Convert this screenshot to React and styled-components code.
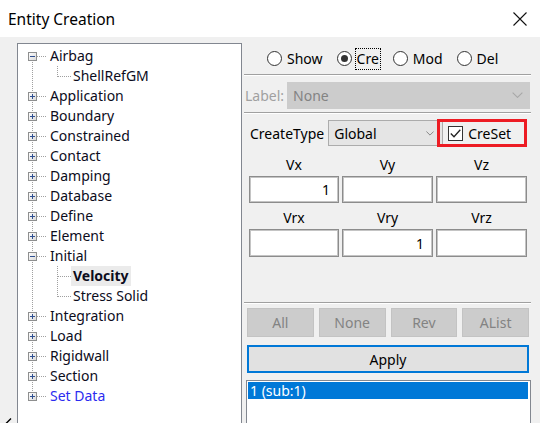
import React from "react";
import styled, { createGlobalStyle } from "styled-components";

const GlobalStyle = createGlobalStyle`
  html, body {
    margin: 0;
    padding: 0;
    background: #f0f0f0;
    overflow: hidden;
  }
  body {
    font-family: "Noto Sans", "Open Sans", sans-serif;
  }
`;

const Window = styled.div`
  width: 540px;
  height: 423px;
  display: flex;
  flex-direction: column;
  background: #f0f0f0;
  color: #000;
  overflow: hidden;
`;

const TitleBar = styled.div`
  height: 37px;
  flex: none;
  box-sizing: border-box;
  background: #fff;
  display: flex;
  align-items: center;
  justify-content: space-between;
  padding: 0 13px 0 8px;
`;

const Title = styled.span`
  font-size: 15.5px;
  line-height: 20px;
`;

const Body = styled.div`
  flex: 1;
  min-height: 0;
  display: flex;
  padding-top: 6px;
  overflow: hidden;
`;

const SideGutter = styled.div`
  width: 17px;
  flex: none;
  display: flex;
  align-items: flex-end;
  justify-content: center;
  svg {
    margin-bottom: -6px;
  }
`;

const TreePanel = styled.div`
  width: 225px;
  height: 400px;
  flex: none;
  box-sizing: border-box;
  border: 1px solid #828790;
  background: #fff;
  padding-top: 2px;
`;

const TreeRow = styled.div`
  height: 20px;
  display: flex;
  align-items: center;
`;

const TreeLabel = styled.span`
  height: 20px;
  line-height: 20px;
  padding: 0 2px;
  font-size: 14px;
  white-space: nowrap;
  font-weight: ${(p) => (p.$selected ? 700 : 400)};
  background: ${(p) => (p.$selected ? "#ebebeb" : "transparent")};
  color: ${(p) => (p.$link ? "#2b2bf0" : "#0c0c1c")};
`;

const RightPanel = styled.div`
  width: 287px;
  flex: none;
  margin-left: 2px;
  display: flex;
  flex-direction: column;
  & > * {
    flex-shrink: 0;
  }
`;

const RadioRow = styled.div`
  height: 31px;
  display: flex;
  align-items: center;
  gap: 13px;
  padding-left: 23px;
`;

const RadioItem = styled.label`
  display: flex;
  align-items: center;
  gap: 4px;
  font-size: 14px;
`;

const RadioCircle = styled.span`
  width: 15px;
  height: 15px;
  box-sizing: border-box;
  border: 1px solid #333;
  border-radius: 50%;
  background: #fff;
  display: flex;
  align-items: center;
  justify-content: center;
  &::after {
    content: "";
    width: 7px;
    height: 7px;
    border-radius: 50%;
    background: ${(p) => (p.$checked ? "#333" : "transparent")};
  }
`;

const RadioText = styled.span`
  line-height: 18px;
  padding: 1px;
  outline: ${(p) => (p.$focused ? "1px dotted #000" : "none")};
`;

const Separator = styled.div`
  height: 0;
  border-top: 1px solid #a0a0a0;
  border-bottom: 1px solid #fff;
  margin-top: ${(p) => p.$mt || 0}px;
`;

const FieldRow = styled.div`
  display: flex;
  align-items: center;
  height: 28px;
  margin-top: ${(p) => p.$mt || 0}px;
  padding-left: ${(p) => p.$pl || 0}px;
  position: relative;
`;

const FieldLabel = styled.span`
  font-size: 14px;
  color: ${(p) => (p.$disabled ? "#a0a0a0" : "#000")};
  white-space: nowrap;
`;

const Select = styled.div`
  box-sizing: border-box;
  height: ${(p) => p.$h}px;
  width: ${(p) => p.$w}px;
  margin-left: ${(p) => p.$ml}px;
  display: flex;
  align-items: center;
  justify-content: space-between;
  padding: 0 ${(p) => (p.$disabled ? 6 : 8)}px 0 5px;
  font-size: 14px;
  background: ${(p) => (p.$disabled ? "#cccccc" : "#e5e5e5")};
  border: 1px solid ${(p) => (p.$disabled ? "#cccccc" : "#acacac")};
  color: ${(p) => (p.$disabled ? "#838383" : "#000")};
`;

const CheckWrap = styled.label`
  display: flex;
  align-items: center;
  gap: 5px;
  margin-left: 5px;
  font-size: 14px;
`;

const CheckBox = styled.span`
  width: 15px;
  height: 15px;
  box-sizing: border-box;
  border: 1px solid #333;
  background: #fff;
  display: flex;
  align-items: center;
  justify-content: center;
`;

const Highlight = styled.div`
  position: absolute;
  left: 193px;
  top: 0;
  width: 90px;
  height: 28px;
  box-sizing: border-box;
  border: 3px solid #ed1c24;
  pointer-events: none;
`;

const VectorGrid = styled.div`
  display: grid;
  grid-template-columns: 90px 91px 91px;
  grid-template-rows: 29px 27px 26px 28px;
  column-gap: 3px;
  padding-left: 5px;
`;

const VectorHead = styled.span`
  align-self: end;
  justify-self: center;
  font-size: 14px;
  line-height: 20px;
  margin-bottom: 1px;
`;

const VectorInput = styled.div`
  box-sizing: border-box;
  border: 1px solid #8c8c8c;
  box-shadow: inset 0 0 0 1px #c4c4c4;
  background: #fff;
  display: flex;
  align-items: center;
  justify-content: flex-end;
  padding-right: 8px;
  font-size: 14px;
`;

const ButtonRow = styled.div`
  display: grid;
  grid-template-columns: repeat(4, 1fr);
  column-gap: 5px;
  margin: 4px 2px 0 3px;
  height: 29px;
`;

const Button = styled.div`
  box-sizing: border-box;
  display: flex;
  align-items: center;
  justify-content: center;
  font-size: 14px;
  background: ${(p) => (p.$primary ? "#e1e1e1" : "#cccccc")};
  border: ${(p) => (p.$primary ? "2px solid #0078d7" : "1px solid #c3c3c3")};
  color: ${(p) => (p.$primary ? "#000" : "#838383")};
`;

const ApplyButton = styled(Button)`
  height: 28px;
  margin: 8px 2px 0 3px;
`;

const ListBox = styled.div`
  margin: 7px 0 0 2px;
  height: 60px;
  box-sizing: border-box;
  border: 1px solid #828790;
  padding: 1px 2px 0 1px;
  background: #fff;
`;

const ListItem = styled.div`
  height: 17px;
  line-height: 17px;
  padding-left: 2px;
  font-size: 14px;
  color: ${(p) => (p.$selected ? "#fff" : "#000")};
  background: ${(p) => (p.$selected ? "#0078d7" : "transparent")};
`;

const tree = [
  { label: "Airbag", open: true, children: ["ShellRefGM"] },
  { label: "Application" },
  { label: "Boundary" },
  { label: "Constrained" },
  { label: "Contact" },
  { label: "Damping" },
  { label: "Database" },
  { label: "Define" },
  { label: "Element" },
  { label: "Initial", open: true, children: ["Velocity", "Stress Solid"], selected: "Velocity" },
  { label: "Integration" },
  { label: "Load" },
  { label: "Rigidwall" },
  { label: "Section" },
  { label: "Set Data", link: true },
];

const DOT = { stroke: "#a0a0a0", strokeWidth: 1, strokeDasharray: "1 1" };

function Expander({ open }) {
  return (
    <g>
      <defs>
        <linearGradient id="expfill" x1="0" y1="0" x2="1" y2="1">
          <stop offset="0" stopColor="#ffffff" />
          <stop offset="1" stopColor="#d8d8d8" />
        </linearGradient>
      </defs>
      <rect x="10.5" y="6.5" width="8" height="8" fill="url(#expfill)" stroke="#8e8f8f" />
      <line x1="12" y1="10.5" x2="17" y2="10.5" stroke="#2f4f8f" />
      {!open && <line x1="14.5" y1="8" x2="14.5" y2="13" stroke="#2f4f8f" />}
    </g>
  );
}

function TopGutter({ first, last, open }) {
  return (
    <svg width="30" height="20">
      <line x1="14.5" y1={first ? 10 : 0} x2="14.5" y2={last ? 10 : 20} {...DOT} />
      <line x1="19" y1="10.5" x2="29" y2="10.5" {...DOT} />
      <Expander open={open} />
    </svg>
  );
}

function ChildGutter({ last }) {
  return (
    <svg width="53" height="20">
      <line x1="14.5" y1="0" x2="14.5" y2="20" {...DOT} />
      <line x1="39.5" y1="0" x2="39.5" y2={last ? 11 : 20} {...DOT} />
      <line x1="40" y1="10.5" x2="53" y2="10.5" {...DOT} />
    </svg>
  );
}

function Tree() {
  const rows = [];
  tree.forEach((node, i) => {
    rows.push(
      <TreeRow key={node.label}>
        <TopGutter first={i === 0} last={i === tree.length - 1} open={node.open} />
        <TreeLabel $link={node.link}>{node.label}</TreeLabel>
      </TreeRow>
    );
    if (node.open) {
      node.children.forEach((child, j) => {
        rows.push(
          <TreeRow key={child}>
            <ChildGutter last={j === node.children.length - 1} />
            <TreeLabel $selected={node.selected === child}>{child}</TreeLabel>
          </TreeRow>
        );
      });
    }
  });
  return <TreePanel>{rows}</TreePanel>;
}

const Chevron = ({ w, color }) => (
  <svg width={w} height={w / 2 + 1} viewBox="0 0 10 6">
    <polyline points="0.5,0.5 5,5 9.5,0.5" fill="none" stroke={color} strokeWidth="1" />
  </svg>
);

const modes = [
  { label: "Show" },
  { label: "Cre", checked: true },
  { label: "Mod" },
  { label: "Del" },
];

const vectors = [
  ["Vx", "Vy", "Vz"],
  ["1", "", ""],
  ["Vrx", "Vry", "Vrz"],
  ["", "1", ""],
];

export default function App() {
  return (
    <Window>
      <GlobalStyle />
      <TitleBar>
        <Title>Entity Creation</Title>
        <svg width="14" height="14" viewBox="0 0 14 14">
          <path d="M0.5 0.5 L13.5 13.5 M13.5 0.5 L0.5 13.5" stroke="#111" strokeWidth="1.1" />
        </svg>
      </TitleBar>
      <Body>
        <SideGutter>
          <svg width="7" height="11" viewBox="0 0 7 11">
            <polyline points="6,0.5 1,5.5 6,10.5" fill="none" stroke="#000" strokeWidth="1.4" />
          </svg>
        </SideGutter>
        <Tree />
        <RightPanel>
          <RadioRow>
            {modes.map((m) => (
              <RadioItem key={m.label}>
                <RadioCircle $checked={m.checked} />
                <RadioText $focused={m.checked}>{m.label}</RadioText>
              </RadioItem>
            ))}
          </RadioRow>
          <Separator />
          <FieldRow $mt={5} $pl={1}>
            <FieldLabel $disabled>Label:</FieldLabel>
            <Select $disabled $w={243} $h={27} $ml={3}>
              <span>None</span>
              <Chevron w={11} color="#a8a8a8" />
            </Select>
          </FieldRow>
          <Separator $mt={3} />
          <FieldRow $mt={5} $pl={6}>
            <FieldLabel>CreateType</FieldLabel>
            <Select $w={115} $h={26} $ml={4}>
              <span>Global</span>
              <Chevron w={8} color="#707070" />
            </Select>
            <CheckWrap>
              <CheckBox>
                <svg width="11" height="9" viewBox="0 0 11 9">
                  <polyline points="0.8,4.5 4,7.8 10.3,0.8" fill="none" stroke="#222" strokeWidth="1.3" />
                </svg>
              </CheckBox>
              CreSet
            </CheckWrap>
            <Highlight />
          </FieldRow>
          <VectorGrid>
            {vectors.map((row, r) =>
              row.map((v, c) =>
                r % 2 === 0 ? (
                  <VectorHead key={`${r}-${c}`}>{v}</VectorHead>
                ) : (
                  <VectorInput key={`${r}-${c}`}>{v}</VectorInput>
                )
              )
            )}
          </VectorGrid>
          <Separator $mt={45} />
          <ButtonRow>
            {["All", "None", "Rev", "AList"].map((b) => (
              <Button key={b}>{b}</Button>
            ))}
          </ButtonRow>
          <ApplyButton $primary>Apply</ApplyButton>
          <ListBox>
            <ListItem $selected>1 (sub:1)</ListItem>
          </ListBox>
        </RightPanel>
      </Body>
    </Window>
  );
}
